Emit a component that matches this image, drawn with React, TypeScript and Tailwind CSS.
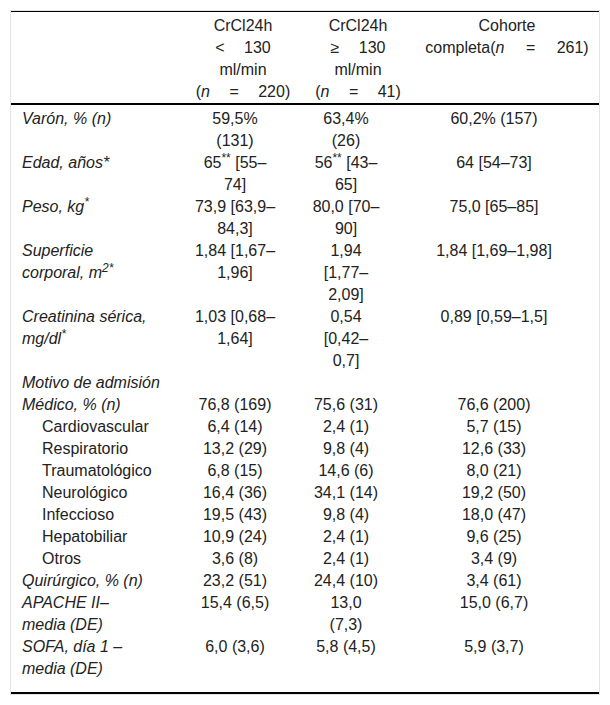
import type { ReactNode } from 'react'

type Row = {
  label: ReactNode
  sub?: boolean
  span?: boolean
  vals?: ReactNode[]
}

const rows: Row[] = [
  { label: 'Varón, % (n)', vals: ['59,5% (131)', '63,4% (26)', '60,2% (157)'] },
  {
    label: 'Edad, años*',
    vals: [
      <>65<sup>**</sup> [55–74]</>,
      <>56<sup>**</sup> [43–65]</>,
      '64 [54–73]',
    ],
  },
  { label: <>Peso, kg<sup>*</sup></>, vals: ['73,9 [63,9–84,3]', '80,0 [70–90]', '75,0 [65–85]'] },
  {
    label: <>Superficie corporal, m<sup>2*</sup></>,
    vals: ['1,84 [1,67–1,96]', '1,94 [1,77–2,09]', '1,84 [1,69–1,98]'],
  },
  {
    label: <>Creatinina sérica, mg/dl<sup>*</sup></>,
    vals: ['1,03 [0,68–1,64]', '0,54 [0,42–0,7]', '0,89 [0,59–1,5]'],
  },
  { label: 'Motivo de admisión', span: true },
  { label: 'Médico, % (n)', vals: ['76,8 (169)', '75,6 (31)', '76,6 (200)'] },
  { label: 'Cardiovascular', sub: true, vals: ['6,4 (14)', '2,4 (1)', '5,7 (15)'] },
  { label: 'Respiratorio', sub: true, vals: ['13,2 (29)', '9,8 (4)', '12,6 (33)'] },
  { label: 'Traumatológico', sub: true, vals: ['6,8 (15)', '14,6 (6)', '8,0 (21)'] },
  { label: 'Neurológico', sub: true, vals: ['16,4 (36)', '34,1 (14)', '19,2 (50)'] },
  { label: 'Infeccioso', sub: true, vals: ['19,5 (43)', '9,8 (4)', '18,0 (47)'] },
  { label: 'Hepatobiliar', sub: true, vals: ['10,9 (24)', '2,4 (1)', '9,6 (25)'] },
  { label: 'Otros', sub: true, vals: ['3,6 (8)', '2,4 (1)', '3,4 (9)'] },
  { label: 'Quirúrgico, % (n)', vals: ['23,2 (51)', '24,4 (10)', '3,4 (61)'] },
  { label: 'APACHE II– media (DE)', vals: ['15,4 (6,5)', '13,0 (7,3)', '15,0 (6,7)'] },
  { label: 'SOFA, día 1 – media (DE)', vals: ['6,0 (3,6)', '5,8 (4,5)', '5,9 (3,7)'] },
]

export default function App() {
  const last = rows.length - 1
  return (
    <div className="bg-white min-h-[705px] pt-[10px] px-[10px] font-['Liberation_Sans',Arial,sans-serif] text-[16px] leading-[22px] text-[#222]">
      <div className="border border-[#e4e4e4]">
        <table className="w-full table-fixed border-collapse">
          <colgroup>
            <col className="w-[174px]" />
            <col className="w-[100px]" />
            <col className="w-[122px]" />
            <col />
          </colgroup>
          <thead>
            <tr className="border-t border-t-black border-b-2 border-b-black">
              <th className="pt-[3px] font-normal" />
              <th className="pt-[3px] pl-[16px] font-normal align-top">
                <div className="flex flex-col items-center whitespace-nowrap [word-spacing:15px]">
                  <span>CrCl24h</span>
                  <span>&lt; 130</span>
                  <span>ml/min</span>
                  <span>(<i>n</i> = 220)</span>
                </div>
              </th>
              <th className="pt-[3px] pl-[24px] font-normal align-top">
                <div className="flex flex-col items-center whitespace-nowrap [word-spacing:15px]">
                  <span>CrCl24h</span>
                  <span>≥ 130</span>
                  <span>ml/min</span>
                  <span>(<i>n</i> = 41)</span>
                </div>
              </th>
              <th className="pt-[3px] pl-[8px] font-normal align-top">
                <div className="flex flex-col items-center whitespace-nowrap [word-spacing:17px]">
                  <span>Cohorte</span>
                  <span>completa(<i>n</i> = 261)</span>
                </div>
              </th>
            </tr>
          </thead>
          <tbody className="border-b-2 border-b-black">
            {rows.map((r, i) => {
              const pad = i === 0 ? 'pt-[3px]' : i === last ? 'pb-[12px]' : ''
              if (r.span) {
                return (
                  <tr key={i}>
                    <td colSpan={4} className={`pl-[11px] italic align-top ${pad}`}>
                      {r.label}
                    </td>
                  </tr>
                )
              }
              return (
                <tr key={i}>
                  <td className={`${r.sub ? 'pl-[31px]' : 'pl-[11px] italic'} pr-[30px] align-top ${pad}`}>
                    {r.label}
                  </td>
                  <td className={`px-[9.5px] text-center align-top ${pad}`}>{r.vals?.[0]}</td>
                  <td className={`px-[27px] text-center align-top ${pad}`}>{r.vals?.[1]}</td>
                  <td className={`pr-[18px] text-center align-top ${pad}`}>{r.vals?.[2]}</td>
                </tr>
              )
            })}
          </tbody>
        </table>
      </div>
    </div>
  )
}
